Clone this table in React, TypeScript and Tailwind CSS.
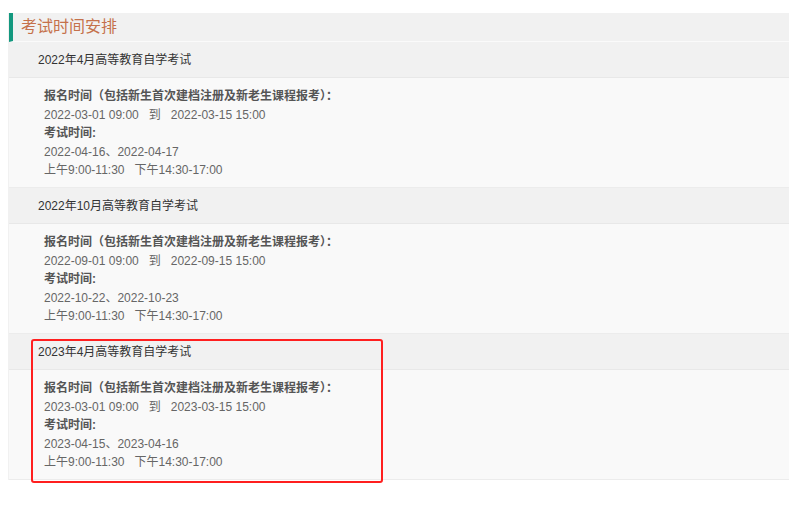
import React from "react";

const sections = [
  {
    title: "2022年4月高等教育自学考试",
    reg: "2022-03-01 09:00\u00a0\u00a0\u00a0到\u00a0\u00a0\u00a02022-03-15 15:00",
    dates: "2022-04-16、2022-04-17",
  },
  {
    title: "2022年10月高等教育自学考试",
    reg: "2022-09-01 09:00\u00a0\u00a0\u00a0到\u00a0\u00a0\u00a02022-09-15 15:00",
    dates: "2022-10-22、2022-10-23",
  },
  {
    title: "2023年4月高等教育自学考试",
    reg: "2023-03-01 09:00\u00a0\u00a0\u00a0到\u00a0\u00a0\u00a02023-03-15 15:00",
    dates: "2023-04-15、2023-04-16",
    highlight: true,
  },
];

export default function App() {
  return (
    <div
      className="w-[790px] h-[510px] bg-white pt-[13px] pl-[8px] pr-[1px]"
      style={{ fontFamily: '"Liberation Sans", "Noto Sans CJK SC", sans-serif' }}
    >
      <div className="bg-[#f9f9f9] border-l border-[#f1f1f1]">
        <div className="h-[29px] bg-[#f1f1f1] border-l-[4px] border-[#13987f] border-b border-b-[#fafafa] flex items-center pl-[8px]">
          <span className="text-[16px] text-[#c5714b] leading-none">考试时间安排</span>
        </div>
        {sections.map((s, i) => (
          <div key={i} className="relative">
            <div className="h-[36px] bg-[#f1f1f1] border-b border-[#e8e8e8] flex items-center pl-[29px] text-[12px] text-[#333]">
              {s.title}
            </div>
            <div className="h-[110px] border-b border-[#ececec] pl-[35px] pt-[9px] text-[12px] leading-[18.5px] text-[#666]">
              <div className="font-bold text-[#555]">报名时间（包括新生首次建档注册及新老生课程报考）：</div>
              <div>{s.reg}</div>
              <div className="font-bold text-[#555]">考试时间:</div>
              <div>{s.dates}</div>
              <div>上午9:00-11:30&nbsp;&nbsp;&nbsp;下午14:30-17:00</div>
            </div>
            {s.highlight && (
              <div className="absolute left-[22px] top-[5px] w-[352px] h-[144px] border-2 border-[#ff1f1f] rounded-[3px] pointer-events-none" />
            )}
          </div>
        ))}
      </div>
    </div>
  );
}
